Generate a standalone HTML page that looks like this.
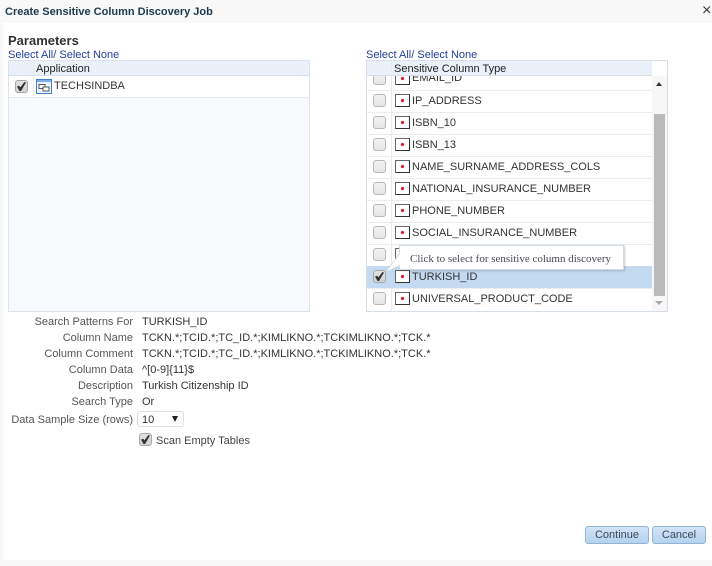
<!DOCTYPE html>
<html><head><meta charset="utf-8">
<style>
html,body{margin:0;padding:0;background:#f8f8f8}
body{width:712px;height:566px;position:relative;overflow:hidden;font-family:"Liberation Sans",sans-serif;font-size:11px;color:#333}
.a{position:absolute;white-space:nowrap}
.cb{position:absolute;width:13px;height:13px;margin:-1px 0 0 0;border:1px solid #b8b8b8;border-radius:3px;background:linear-gradient(#f2f2f2,#e6e6e6);box-sizing:border-box}
.cb.c{background:linear-gradient(#e2e2e2,#d2d2d2);border-color:#a8a8a8}
.cb.c::after{content:"";position:absolute;left:1px;top:1px;width:9px;height:9px;background:#333;clip-path:polygon(0 52%,25% 42%,38% 60%,82% 0,100% 5%,45% 100%,28% 100%)}
.ic{position:absolute;width:15px;height:13px;background:#fff;border:1px solid #666;border-right:1.5px solid #333;border-bottom:1.5px solid #333;box-sizing:border-box}
.ic::after{content:"";position:absolute;left:5px;top:4px;width:3px;height:3px;border-radius:50%;background:#d8142a;box-shadow:0 0 1px #f08098}
.rt{font-size:11px;line-height:13px;text-align:right;right:579px;color:#555}
.v{left:142px;line-height:13px;color:#333}
.l{color:#25409a;font-size:11px;line-height:13px}
.hd{font-size:11px;color:#222;line-height:14px}
.sep{position:absolute;height:1px;background:#e9edf2}
</style></head><body>
<div class="a" style="left:3px;top:23px;width:709px;height:537px;background:#fff"></div>
<div class="a" style="left:5px;top:5px;font-weight:bold;font-size:11px;line-height:14px;color:#1c3a50">Create Sensitive Column Discovery Job</div>
<svg class="a" style="left:703px;top:5px" width="9" height="10"><path d="M.5 1.5L7 8M7 1.5L.5 8" stroke="#333" stroke-width="1.1"/></svg>
<div class="a" style="left:8px;top:33px;font-weight:bold;font-size:13px;line-height:15px;color:#333">Parameters</div>
<div class="a l" style="left:8px;top:49px">Select All/ Select None</div>
<div class="a l" style="left:366px;top:49px">Select All/ Select None</div>

<!-- left table -->
<div class="a" style="left:8px;top:60px;width:302px;height:252px;box-sizing:border-box;border:1px solid #dde3ea;background:#f7f9fc"></div>
<div class="a" style="left:9px;top:61px;width:300px;height:14px;background:#ebf1f9"></div>
<div class="a" style="left:9px;top:75px;width:300px;height:1px;background:#d6dee8"></div>
<div class="a" style="left:33px;top:61px;width:1px;height:36px;background:#e3e8ee"></div>
<div class="a" style="left:9px;top:76px;width:300px;height:21px;background:#fff"></div>
<div class="a" style="left:33px;top:76px;width:1px;height:21px;background:#e9edf2"></div>
<div class="a" style="left:9px;top:97px;width:300px;height:1px;background:#e4e9ef"></div>
<div class="a hd" style="left:36px;top:62px">Application</div>
<div class="cb c" style="left:15px;top:81px"></div>
<svg class="a" style="left:36px;top:79px" width="16" height="15"><rect x=".5" y=".5" width="15" height="14" fill="#eaf3fd" stroke="#3f7fc8"/><rect x="1" y="1" width="14" height="2" fill="#7db0e8"/><rect x="3" y="5.5" width="6" height="4" fill="#fff" stroke="#555"/><rect x="7" y="8" width="6" height="4" fill="#fff" stroke="#555"/></svg>
<div class="a" style="left:54px;top:80px;line-height:13px;color:#333">TECHSINDBA</div>

<!-- right table -->
<div class="a" style="left:366px;top:60px;width:302px;height:252px;box-sizing:border-box;border:1px solid #d6dee8;background:#fff"></div>
<div class="a" style="left:367px;top:61px;width:285px;height:14px;background:#ebf1f9"></div>
<div class="a" style="left:367px;top:75px;width:285px;height:1px;background:#d6dee8"></div>
<div class="a" style="left:391px;top:61px;width:1px;height:250px;background:#e6ebf1"></div>
<div class="a" style="left:367px;top:266px;width:285px;height:23px;background:#c4daf0"></div>
<div class="sep" style="left:367px;top:90px;width:285px"></div>
<div class="sep" style="left:367px;top:112px;width:285px"></div>
<div class="sep" style="left:367px;top:134px;width:285px"></div>
<div class="sep" style="left:367px;top:156px;width:285px"></div>
<div class="sep" style="left:367px;top:178px;width:285px"></div>
<div class="sep" style="left:367px;top:200px;width:285px"></div>
<div class="sep" style="left:367px;top:222px;width:285px"></div>
<div class="sep" style="left:367px;top:244px;width:285px"></div>
<div class="sep" style="left:367px;top:288px;width:285px"></div>
<div class="a hd" style="left:394px;top:62px">Sensitive Column Type</div>

<!-- email row clipped -->
<div class="a" style="left:367px;top:76px;width:285px;height:14px;overflow:hidden">
 <div class="cb" style="left:6px;top:-3px"></div>
 <div class="ic" style="left:28px;top:-4px"></div>
 <div class="a" style="left:45px;top:-4px;line-height:13px">EMAIL_ID</div>
</div>
<div class="cb" style="left:373px;top:95px"></div><div class="ic" style="left:395px;top:94px"></div><div class="a" style="left:412px;top:95px;line-height:13px">IP_ADDRESS</div>
<div class="cb" style="left:373px;top:117px"></div><div class="ic" style="left:395px;top:116px"></div><div class="a" style="left:412px;top:117px;line-height:13px">ISBN_10</div>
<div class="cb" style="left:373px;top:139px"></div><div class="ic" style="left:395px;top:138px"></div><div class="a" style="left:412px;top:139px;line-height:13px">ISBN_13</div>
<div class="cb" style="left:373px;top:161px"></div><div class="ic" style="left:395px;top:160px"></div><div class="a" style="left:412px;top:161px;line-height:13px">NAME_SURNAME_ADDRESS_COLS</div>
<div class="cb" style="left:373px;top:183px"></div><div class="ic" style="left:395px;top:182px"></div><div class="a" style="left:412px;top:183px;line-height:13px">NATIONAL_INSURANCE_NUMBER</div>
<div class="cb" style="left:373px;top:205px"></div><div class="ic" style="left:395px;top:204px"></div><div class="a" style="left:412px;top:205px;line-height:13px">PHONE_NUMBER</div>
<div class="cb" style="left:373px;top:227px"></div><div class="ic" style="left:395px;top:226px"></div><div class="a" style="left:412px;top:227px;line-height:13px">SOCIAL_INSURANCE_NUMBER</div>
<div class="cb" style="left:373px;top:249px"></div><div class="ic" style="left:395px;top:248px"></div>
<div class="cb c" style="left:373px;top:271px"></div><div class="ic" style="left:395px;top:270px"></div><div class="a" style="left:412px;top:271px;line-height:13px">TURKISH_ID</div>
<div class="cb" style="left:373px;top:293px"></div><div class="ic" style="left:395px;top:292px"></div><div class="a" style="left:412px;top:293px;line-height:13px">UNIVERSAL_PRODUCT_CODE</div>

<!-- scrollbar -->
<div class="a" style="left:652px;top:76px;width:15px;height:235px;background:#f7f7f7"></div>
<div class="a" style="left:652px;top:61px;width:15px;height:14px;background:#fff"></div>
<div class="a" style="left:654px;top:114px;width:11px;height:182px;background:#bababa"></div>
<div class="a" style="left:656px;top:82px;width:0;height:0;border-left:3.5px solid transparent;border-right:3.5px solid transparent;border-bottom:4px solid #333"></div>
<div class="a" style="left:655px;top:301px;width:0;height:0;border-left:4px solid transparent;border-right:4px solid transparent;border-top:4px solid #aaa"></div>

<!-- tooltip -->
<svg class="a" style="left:385px;top:253px" width="16" height="20"><path d="M15 0L1 19L15 12Z" fill="#fff"/><path d="M15 0L1 19L15 12" fill="none" stroke="#d3dbe3"/></svg>
<div class="a" style="left:399px;top:245px;width:225px;height:25px;box-sizing:border-box;background:#fff;border:1px solid #d3dbe3;box-shadow:1px 1px 2px rgba(0,0,0,.2)"></div>
<svg class="a" style="left:385px;top:253px" width="16" height="20"><path d="M15 1L2 18L15 12Z" fill="#fff"/></svg>
<div class="a" style="left:410px;top:253px;font-family:'Liberation Serif',serif;font-size:11px;line-height:13px;color:#4a4a55">Click to select for sensitive column discovery</div>

<!-- details -->
<div class="a rt" style="top:316px">Search Patterns For</div><div class="a v" style="top:316px">TURKISH_ID</div>
<div class="a rt" style="top:332px">Column Name</div><div class="a v" style="top:332px">TCKN.*;TCID.*;TC_ID.*;KIMLIKNO.*;TCKIMLIKNO.*;TCK.*</div>
<div class="a rt" style="top:348px">Column Comment</div><div class="a v" style="top:348px">TCKN.*;TCID.*;TC_ID.*;KIMLIKNO.*;TCKIMLIKNO.*;TCK.*</div>
<div class="a rt" style="top:364px">Column Data</div><div class="a v" style="top:364px">^[0-9]{11}$</div>
<div class="a rt" style="top:380px">Description</div><div class="a v" style="top:380px">Turkish Citizenship ID</div>
<div class="a rt" style="top:396px">Search Type</div><div class="a v" style="top:396px">Or</div>
<div class="a rt" style="top:414px">Data Sample Size (rows)</div>
<div class="a" style="left:137px;top:411px;width:47px;height:16px;box-sizing:border-box;border:1px solid #d8e0e8;border-radius:3px;background:#fff"></div>
<div class="a v" style="top:414px">10</div>
<div class="a" style="left:172px;top:416px;width:0;height:0;border-left:3.5px solid transparent;border-right:3.5px solid transparent;border-top:6px solid #222"></div>
<div class="cb c" style="left:139px;top:434px"></div>
<div class="a" style="left:156px;top:435px;line-height:13px;color:#444">Scan Empty Tables</div>

<!-- buttons -->
<div class="a" style="left:585px;top:526px;width:64px;height:18px;box-sizing:border-box;border:1px solid #92b4d4;border-radius:3px;background:linear-gradient(#d2e4f7,#b4d2f0);text-align:center;line-height:16px;color:#3a4a58">Continue</div>
<div class="a" style="left:652px;top:526px;width:54px;height:18px;box-sizing:border-box;border:1px solid #92b4d4;border-radius:3px;background:linear-gradient(#d2e4f7,#b4d2f0);text-align:center;line-height:16px;color:#3a4a58">Cancel</div>
</body></html>
